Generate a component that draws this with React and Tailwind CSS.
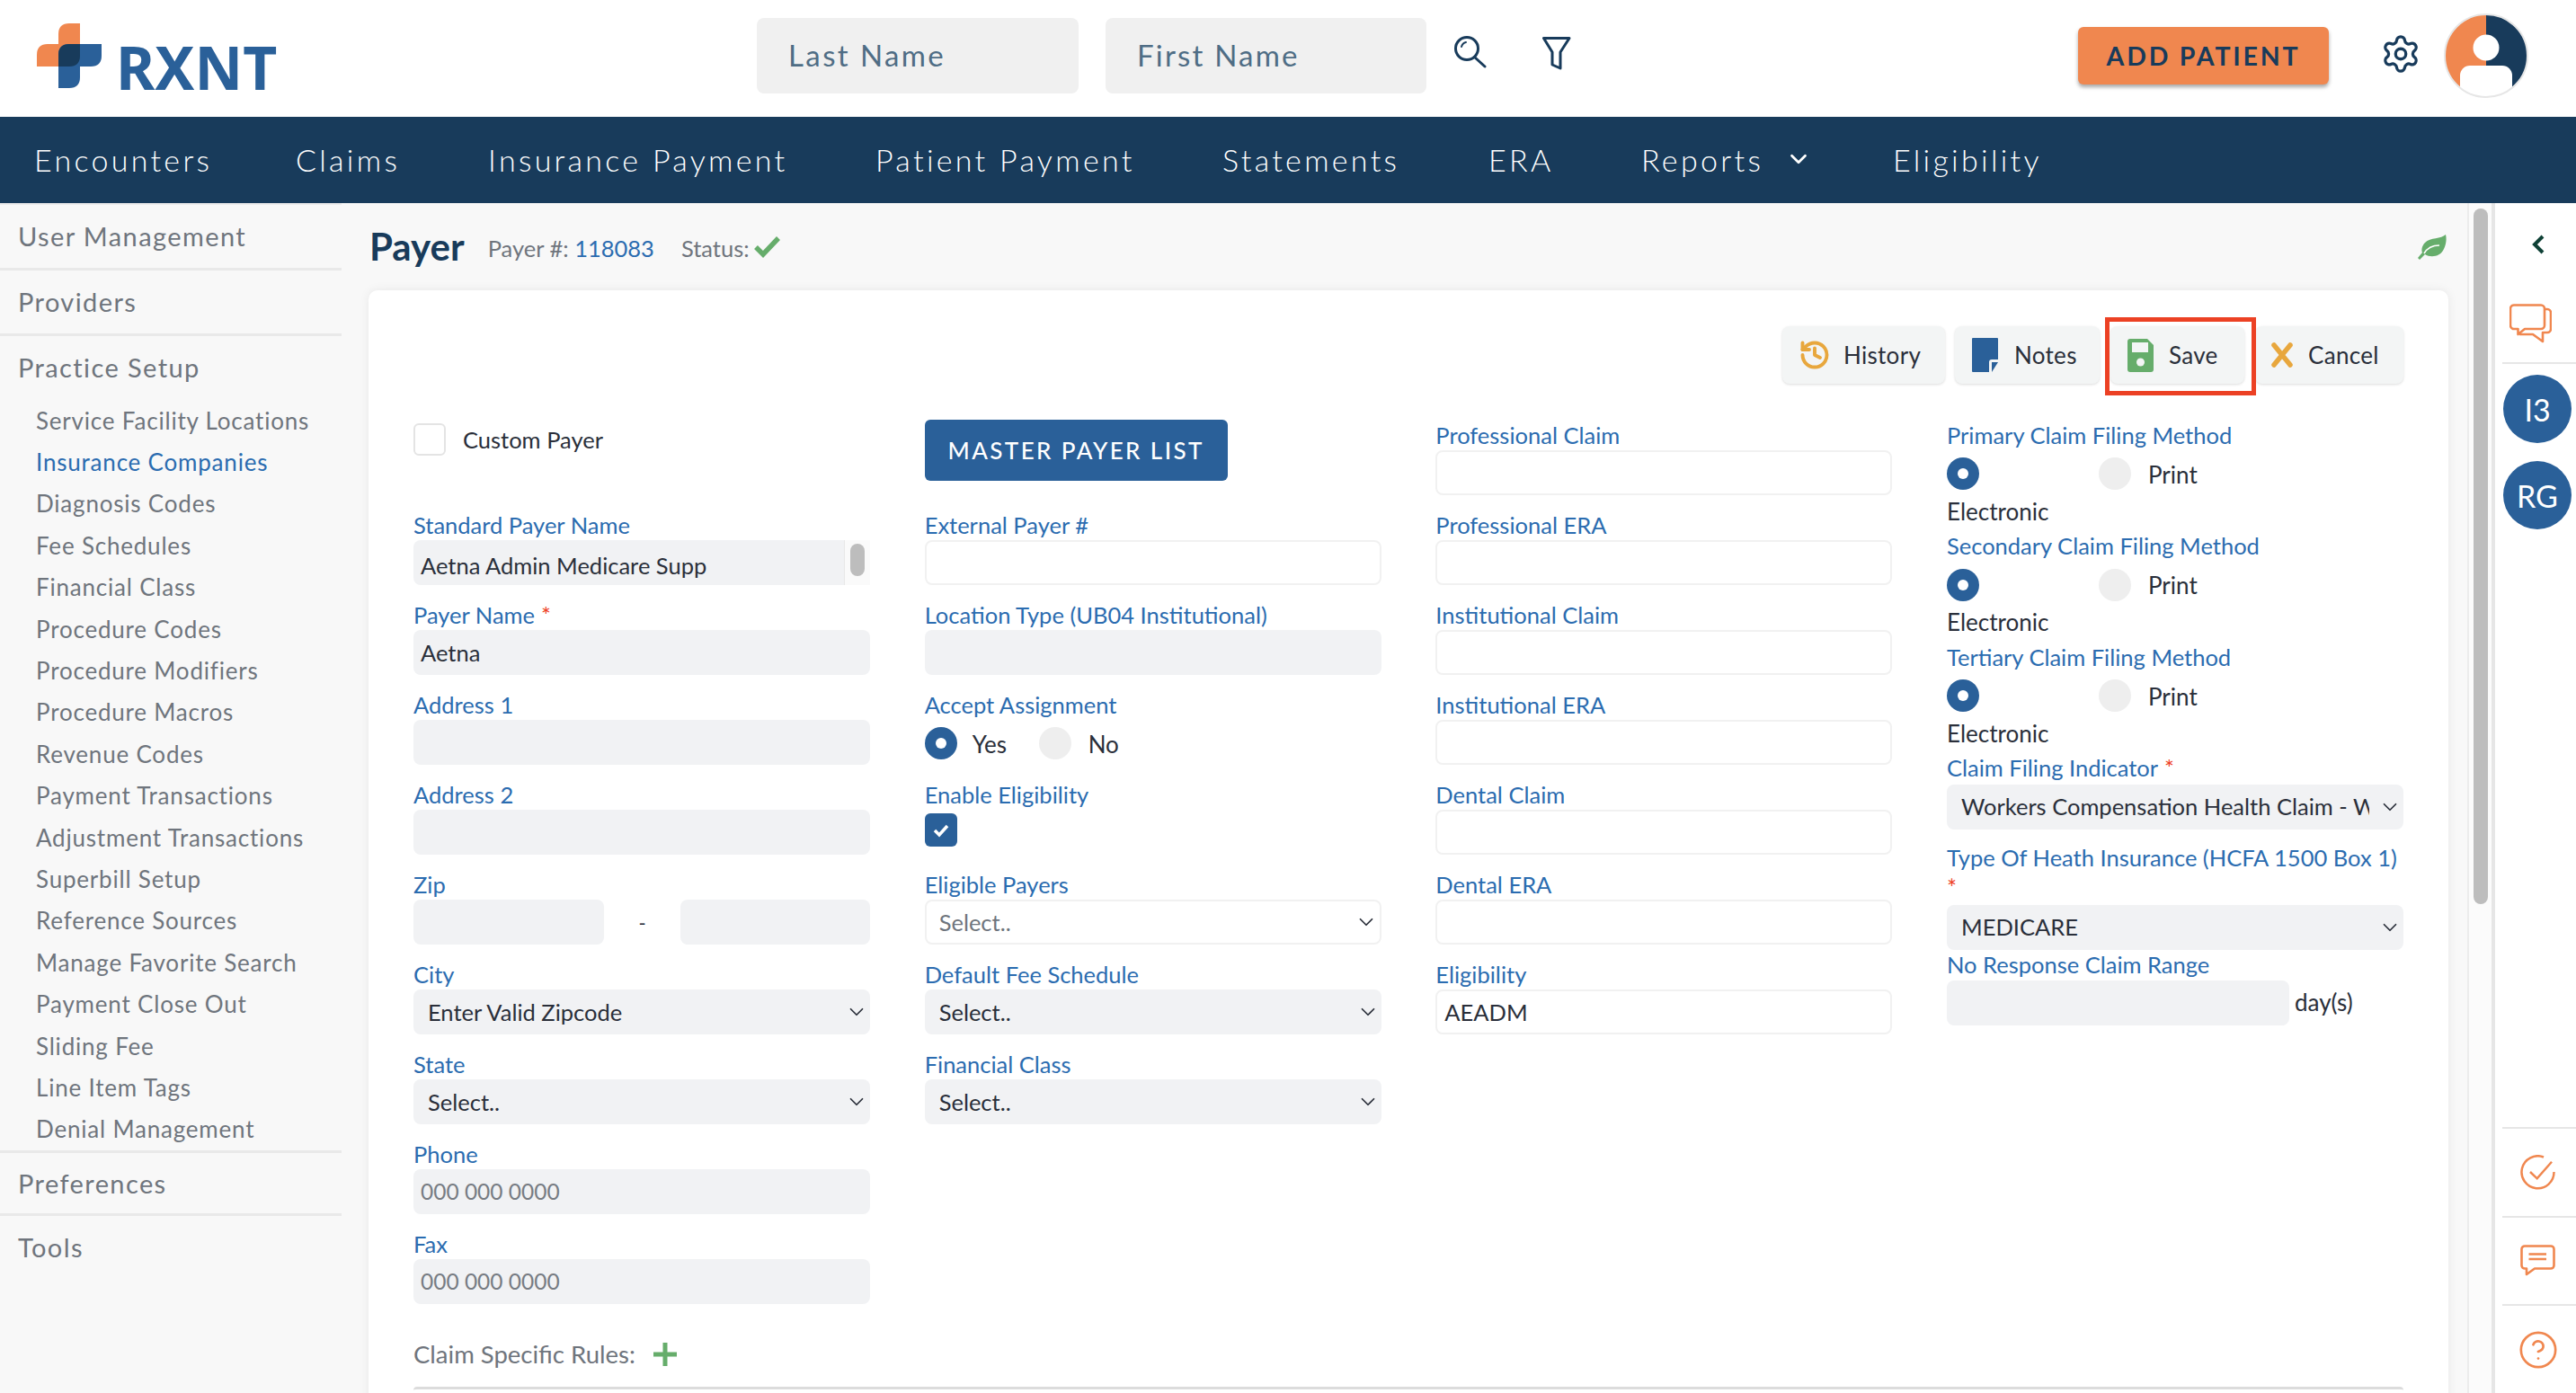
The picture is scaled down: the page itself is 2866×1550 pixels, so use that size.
import { ChevronDown, History, Settings, CircleHelp } from "lucide-react";

const sideMain = ["User Management", "Providers"];
const sideSub = [
  "Service Facility Locations", "Insurance Companies", "Diagnosis Codes", "Fee Schedules", "Financial Class",
  "Procedure Codes", "Procedure Modifiers", "Procedure Macros", "Revenue Codes", "Payment Transactions",
  "Adjustment Transactions", "Superbill Setup", "Reference Sources", "Manage Favorite Search", "Payment Close Out",
  "Sliding Fee", "Line Item Tags", "Denial Management",
];

function Logo() {
  return (
    <div className="flex items-center">
      <svg width="72" height="72" viewBox="0 0 72 72">
        <path d="M24 23V12Q24 0 36 0H48V36Q48 48 36 48H0V35Q0 23 12 23Z" fill="#f0874f" />
        <path d="M36 23H72V36Q72 48 60 48H48V60Q48 72 36 72H24V35Q24 23 36 23Z" fill="#2a6099" />
        <path d="M36 23H48V36Q48 48 36 48H24V35Q24 23 36 23Z" fill="#183b5b" />
      </svg>
      <span className="ml-[16px] mt-[23px] w-[178px] font-['Noto_Sans',sans-serif] text-[66px] leading-[50px] font-bold text-[#2a6099]">RXNT</span>
    </div>
  );
}

function Header() {
  return (
    <div className="flex h-[130px] items-center bg-white pb-[6px] pl-[41px] pr-[53px]">
      <Logo />
      <div className="ml-[535px] flex h-[84px] w-[358px] items-center rounded-lg bg-[#f0f0f0] pl-[35px] text-[33px] tracking-[2.4px] text-[#4f6d85]">Last Name</div>
      <div className="ml-[30px] flex h-[84px] w-[357px] items-center rounded-lg bg-[#f0f0f0] pl-[35px] text-[33px] tracking-[2.2px] text-[#4f6d85]">First Name</div>
      <svg className="ml-[31px] -mt-[8px]" width="36" height="36" viewBox="0 0 36 36" fill="none" stroke="#183b5b" strokeWidth="3" strokeLinecap="round">
        <circle cx="14" cy="14" r="12.5" />
        <path d="M22.5 23.5L34 34" />
        <path d="M8 12Q9 8 13 7" strokeWidth="2" />
      </svg>
      <svg className="ml-[62px] -mt-[6px]" width="32" height="38" viewBox="0 0 32 38" fill="none" stroke="#183b5b" strokeWidth="3" strokeLinejoin="round">
        <path d="M1.5 2.5H30L20 18V36L11 32V18Z" />
      </svg>
      <button className="ml-auto flex h-[64px] w-[279px] items-center justify-center rounded-md bg-[#f0874f] text-[28.5px] font-bold tracking-[2.8px] text-[#183b5b] shadow-[0_3px_4px_rgba(0,0,0,0.35)]">ADD PATIENT</button>
      <Settings className="ml-[57px] -mt-[4px] text-[#183b5b]" size={46} strokeWidth={1.7} />
      <svg className="ml-[25px]" width="94" height="94" viewBox="0 0 94 94">
        <clipPath id="avatarClip"><circle cx="47" cy="47" r="46" /></clipPath>
        <g clipPath="url(#avatarClip)">
          <rect x="0" y="0" width="47" height="94" fill="#f0874f" />
          <rect x="47" y="0" width="47" height="94" fill="#183b5b" />
          <circle cx="47" cy="38" r="14.5" fill="white" />
          <rect x="18" y="58" width="58" height="50" rx="11" fill="white" />
        </g>
        <circle cx="47" cy="47" r="46" fill="none" stroke="#e6e6e6" strokeWidth="2" />
      </svg>
    </div>
  );
}

function NavBar() {
  return (
    <div className="flex h-[96px] items-center bg-[#183b5b] pb-[2px] pl-[38px] text-[34px] font-light tracking-[3.3px] text-white">
      <span className="w-[291px]">Encounters</span>
      <span className="w-[214px]">Claims</span>
      <span className="w-[431px]">Insurance Payment</span>
      <span className="w-[386px]">Patient Payment</span>
      <span className="w-[296px]">Statements</span>
      <span className="w-[170px]">ERA</span>
      <span className="flex w-[280px] items-center">
        Reports
        <ChevronDown className="ml-[24px]" size={30} strokeWidth={2.2} />
      </span>
      <span>Eligibility</span>
    </div>
  );
}

function Sidebar() {
  return (
    <div className="w-[380px] shrink-0 border-t-2 border-[#ececec] text-[#6f757d]">
      {sideMain.map((s) => (
        <div key={s} className="flex h-[73px] items-center border-b-[3px] border-[#e9e9e9] pl-[20px] text-[29px] tracking-[1.4px]">{s}</div>
      ))}
      <div className="flex h-[71px] items-center pb-[2px] pl-[20px] text-[29px] tracking-[1.4px]">Practice Setup</div>
      <div className="border-b-[3px] border-[#e9e9e9]">
        {sideSub.map((s) => (
          <div key={s} className={`flex h-[46.4px] items-center pl-[40px] text-[26px] tracking-[0.8px] ${s === "Insurance Companies" ? "text-[#2b6cb0]" : ""}`}>{s}</div>
        ))}
      </div>
      <div className="flex h-[70px] items-center border-b-[3px] border-[#e9e9e9] pl-[20px] text-[29px] tracking-[1.4px]">Preferences</div>
      <div className="flex h-[70px] items-center pl-[20px] text-[29px] tracking-[1.4px]">Tools</div>
    </div>
  );
}

function Label({ children, required }) {
  return (
    <div className="flex h-8 items-center whitespace-nowrap pb-[2px] text-[25.5px] text-[#2b6cb0]">
      {children}
      {required && <span className="ml-[7px] text-[#ee3f26]">*</span>}
    </div>
  );
}

function TextBox({ value, placeholder, white, className = "" }) {
  return (
    <div className={`flex h-[50px] items-center rounded-lg pl-2 ${white ? "border-2 border-[#f1f1f1] bg-white" : "bg-[#f1f2f4]"} ${placeholder ? "text-[24.5px] text-[#777c83]" : "text-[25.5px] text-[#2a2f3a]"} ${className}`}>
      {value || placeholder}
    </div>
  );
}

function SelectBox({ value, white, muted }) {
  return (
    <div className={`flex h-[50px] items-center rounded-lg pr-[2px] text-[25.5px] ${white ? "border-2 border-[#f1f1f1] bg-white pl-[14px]" : "bg-[#f1f2f4] pl-4"} ${muted ? "text-[#6f757d]" : "text-[#2a2f3a]"}`}>
      <span className="flex-1 overflow-hidden whitespace-nowrap">{value}</span>
      <ChevronDown className="ml-[10px] shrink-0 text-[#2a2f3a]" size={26} strokeWidth={1.6} />
    </div>
  );
}

function Field({ label, required, children }) {
  return (
    <div className="h-[100px]">
      <Label required={required}>{label}</Label>
      {children}
    </div>
  );
}

function Radio({ on }) {
  return (
    <span className={`flex h-9 w-9 shrink-0 items-center justify-center rounded-full ${on ? "bg-[#2a6099]" : "bg-[#eeeeee]"}`}>
      {on && <span className="h-3 w-3 rounded-full bg-white" />}
    </span>
  );
}

function FilingMethod({ label }) {
  return (
    <div className="h-[123.5px]">
      <Label>{label}</Label>
      <div className="mt-2 flex h-9 items-center text-[26px] text-[#2a2f3a]">
        <div className="w-[169px]"><Radio on /></div>
        <Radio />
        <span className="ml-[19px] mt-[2px]">Print</span>
      </div>
      <div className="mt-2 flex h-8 items-center text-[26px] text-[#2a2f3a]">Electronic</div>
    </div>
  );
}

function ColumnOne() {
  return (
    <div>
      <div className="flex h-[102px] items-start pt-1">
        <span className="h-9 w-9 rounded-md border-2 border-[#e4e4e4] bg-white" />
        <span className="ml-[19px] -mt-px text-[25.5px] text-[#2a2f3a]">Custom Payer</span>
      </div>
      <Field label="Standard Payer Name">
        <div className="relative">
          <TextBox value="Aetna Admin Medicare Supp" className="pt-[7px]" />
          <div className="absolute right-0 top-0 flex h-[50px] w-[29px] justify-center border-l border-[#e8e8e8] bg-[#fafafa] pt-1">
            <span className="h-9 w-[16px] rounded-full bg-[#bdbdbd]" />
          </div>
        </div>
      </Field>
      <Field label="Payer Name" required><TextBox value="Aetna" /></Field>
      <Field label="Address 1"><TextBox /></Field>
      <Field label="Address 2"><TextBox /></Field>
      <Field label="Zip">
        <div className="flex items-center">
          <TextBox className="w-[212px]" />
          <span className="w-[85px] text-center text-[22px] text-[#2a2f3a]">-</span>
          <TextBox className="w-[211px]" />
        </div>
      </Field>
      <Field label="City"><SelectBox value="Enter Valid Zipcode" /></Field>
      <Field label="State"><SelectBox value="Select.." /></Field>
      <Field label="Phone"><TextBox placeholder="000 000 0000" /></Field>
      <Field label="Fax"><TextBox placeholder="000 000 0000" /></Field>
    </div>
  );
}

function ColumnTwo() {
  return (
    <div>
      <div className="h-[102px]">
        <button className="flex h-[68px] w-[337px] items-center justify-center rounded-md bg-[#2a6099] text-[26px] font-medium tracking-[2.4px] text-white">MASTER PAYER LIST</button>
      </div>
      <Field label="External Payer #"><TextBox white /></Field>
      <Field label="Location Type (UB04 Institutional)"><TextBox /></Field>
      <Field label="Accept Assignment">
        <div className="mt-2 flex h-9 items-center text-[26px] text-[#2a2f3a]">
          <Radio on />
          <span className="ml-[17px] mt-[2px] w-[74px]">Yes</span>
          <Radio />
          <span className="ml-[19px] mt-[2px]">No</span>
        </div>
      </Field>
      <Field label="Enable Eligibility">
        <div className="mt-1 flex h-[37px] w-9 items-center justify-center rounded-md bg-[#2a6099]">
          <svg width="20" height="16" viewBox="0 0 20 16" fill="none" stroke="white" strokeWidth="3.5"><path d="M3 8l5 5L17 3" /></svg>
        </div>
      </Field>
      <Field label="Eligible Payers"><SelectBox value="Select.." white muted /></Field>
      <Field label="Default Fee Schedule"><SelectBox value="Select.." /></Field>
      <Field label="Financial Class"><SelectBox value="Select.." /></Field>
    </div>
  );
}

function ColumnThree() {
  return (
    <div className="pt-[2px]">
      <Field label="Professional Claim"><TextBox white /></Field>
      <Field label="Professional ERA"><TextBox white /></Field>
      <Field label="Institutional Claim"><TextBox white /></Field>
      <Field label="Institutional ERA"><TextBox white /></Field>
      <Field label="Dental Claim"><TextBox white /></Field>
      <Field label="Dental ERA"><TextBox white /></Field>
      <Field label="Eligibility"><TextBox white value="AEADM" /></Field>
    </div>
  );
}

function ColumnFour() {
  return (
    <div className="pt-[2px]">
      <FilingMethod label="Primary Claim Filing Method" />
      <FilingMethod label="Secondary Claim Filing Method" />
      <FilingMethod label="Tertiary Claim Filing Method" />
      <Label required>Claim Filing Indicator</Label>
      <div className="mt-px"><SelectBox value="Workers Compensation Health Claim - Workers" /></div>
      <div className="mt-[17px]"><Label>Type Of Heath Insurance (HCFA 1500 Box 1)</Label></div>
      <div className="h-[35px] text-[26px] leading-[32px] text-[#ee3f26]">*</div>
      <SelectBox value="MEDICARE" />
      <div className="mt-[2px]"><Label>No Response Claim Range</Label></div>
      <div className="flex items-center">
        <TextBox className="w-[381px]" />
        <span className="ml-[6px] text-[26px] text-[#2a2f3a]">day(s)</span>
      </div>
    </div>
  );
}

function Toolbar() {
  const btn = "flex h-[64px] items-center rounded-lg bg-[#f3f5f5] text-[26px] tracking-[0.3px] text-[#2a2f3a] shadow-[0_1px_3px_rgba(0,0,0,0.14)]";
  return (
    <div className="flex h-[64px] justify-end">
      <button className={`${btn} w-[181px] pl-[18px]`}>
        <History size={36} strokeWidth={2.6} className="text-[#e8a73d]" />
        <span className="ml-[14px]">History</span>
      </button>
      <button className={`${btn} ml-[11px] w-[161px] pl-[19px]`}>
        <svg width="29" height="38" viewBox="0 0 29 38">
          <path d="M0 1a1 1 0 0 1 1-1h27a1 1 0 0 1 1 1v23H22a3 3 0 0 0-3 3v11H1a1 1 0 0 1-1-1Z" fill="#2a6099" />
          <path d="M22 27h7L22 38Z" fill="#2a6099" />
        </svg>
        <span className="ml-[18px]">Notes</span>
      </button>
      <button className={`${btn} relative ml-3 w-[149px] pl-[19px]`}>
        <svg width="29" height="37" viewBox="0 0 29 37">
          <path d="M3 0H22L29 7V34a3 3 0 0 1-3 3H3a3 3 0 0 1-3-3V3a3 3 0 0 1 3-3Z" fill="#66ad6b" />
          <rect x="5" y="4" width="18" height="11" fill="#f3f5f5" />
          <circle cx="14.5" cy="26" r="4.5" fill="#f3f5f5" />
        </svg>
        <span className="ml-[17px]">Save</span>
        <span className="absolute -bottom-[13px] -left-[6px] -right-[13px] -top-[10px] border-[5px] border-[#ec4124]" />
      </button>
      <button className={`${btn} ml-3 w-[165px] pl-[18px]`}>
        <svg width="24" height="28" viewBox="0 0 24 28" fill="none" stroke="#e8a73d" strokeWidth="5.5" strokeLinecap="round"><path d="M3 3L21 25M21 3L3 25" /></svg>
        <span className="ml-[17px]">Cancel</span>
      </button>
    </div>
  );
}

function PageTitle() {
  return (
    <div className="flex h-[97px] items-center pl-[1px]">
      <span className="text-[42px] font-bold text-[#183b5b]">Payer</span>
      <span className="ml-[26px] mt-1 text-[25.5px] text-[#6f757d]">Payer #: <span className="text-[#2b6cb0]">118083</span></span>
      <span className="ml-[30px] mt-1 text-[25.5px] text-[#6f757d]">Status:</span>
      <svg className="ml-[5px]" width="29" height="24" viewBox="0 0 29 24" fill="none" stroke="#66ad6b" strokeWidth="5.5"><path d="M2 12l8 8L27 2" /></svg>
      <svg className="ml-auto mr-[2px]" width="32" height="28" viewBox="0 0 32 28">
        <path d="M31 0C26 5 14 3 8 9C4 13 4 18 5 20L0 26L2 28L8 22C14 26 25 25 29 16C32 10 32 4 31 0Z" fill="#66ad6b" />
        <path d="M7 21C11 14 17 12 24 12" stroke="white" strokeWidth="1.6" fill="none" />
      </svg>
    </div>
  );
}

function RightRail() {
  return (
    <div className="flex w-[94px] shrink-0 flex-col border-l-4 border-[#e6e6e6] bg-white pl-2">
      <div className="flex h-[92px] items-center justify-center pr-[2px]">
        <svg width="14" height="22" viewBox="0 0 14 22" fill="none" stroke="#0f4136" strokeWidth="4"><path d="M12 2L3 11l9 9" /></svg>
      </div>
      <div className="h-[87px] border-b-[2px] border-[#e6e6e6] pl-[8px] pt-[20px]">
        <svg width="47" height="44" viewBox="0 0 47 44" fill="none" stroke="#f0874f" strokeWidth="2.6" strokeLinejoin="round">
          <path d="M5 1.5H35a4 4 0 0 1 4 4V24a4 4 0 0 1-4 4H17L9.5 34V28H5a4 4 0 0 1-4-4V5.5a4 4 0 0 1 4-4Z" />
          <path d="M39 6h3a4 4 0 0 1 4 4V28a4 4 0 0 1-4 4H37V42L26 34H11" />
        </svg>
      </div>
      <div className="ml-px mt-[12px] flex h-[76px] w-[76px] items-center justify-center rounded-full bg-[#2a6099] text-[34px] text-white">I3</div>
      <div className="ml-px mt-5 flex h-[76px] w-[76px] items-center justify-center rounded-full bg-[#2a6099] text-[34px] text-white">RG</div>
      <div className="mt-auto flex h-[99px] items-center border-t-[2px] border-[#e6e6e6] pl-[20px]">
        <svg width="40" height="40" viewBox="0 0 40 40" fill="none" stroke="#f0874f" strokeWidth="2.5">
          <path d="M26 2.5A18 18 0 1 0 37.5 19" />
          <path d="M11 19l7.7 7.3L35 7.7" />
        </svg>
      </div>
      <div className="flex h-[98px] items-center border-t-[2px] border-[#e6e6e6] pl-[20px]">
        <svg width="39" height="36" viewBox="0 0 39 36" fill="none" stroke="#f0874f" strokeWidth="2.6" strokeLinejoin="round">
          <path d="M5 1.5H34a3.5 3.5 0 0 1 3.5 3.5V23a3.5 3.5 0 0 1-3.5 3.5H16L7 33V26.5H5A3.5 3.5 0 0 1 1.5 23V5A3.5 3.5 0 0 1 5 1.5Z" />
          <path d="M9.5 10.5H29M9.5 16H29" />
        </svg>
      </div>
      <div className="flex h-[99px] items-center border-t-[2px] border-[#e6e6e6] pl-[17px]">
        <CircleHelp className="text-[#f0874f]" size={46} strokeWidth={1.4} />
      </div>
    </div>
  );
}

export default function App() {
  return (
    <div className="flex h-[1550px] w-[2866px] flex-col overflow-hidden bg-[#f8f8f8] font-['Lato',sans-serif]">
      <Header />
      <NavBar />
      <div className="flex min-h-0 flex-1">
        <Sidebar />
        <div className="flex-1 overflow-hidden pl-[30px] pr-[21px]">
          <PageTitle />
          <div className="h-[1300px] rounded-[10px] bg-white px-[50px] pt-[40px] shadow-[0_0_12px_rgba(0,0,0,0.07)]">
            <Toolbar />
            <div className="mt-[40px] grid grid-cols-4 gap-x-[60.67px]">
              <ColumnOne />
              <ColumnTwo />
              <ColumnThree />
              <ColumnFour />
            </div>
            <div className="mt-[10px] mb-[9px] flex h-[55px] items-center text-[27.5px] text-[#6f757d]">
              Claim Specific Rules:
              <svg className="ml-[20px]" width="26" height="26" viewBox="0 0 26 26" fill="none" stroke="#66ad6b" strokeWidth="5"><path d="M13 0V26M0 13H26" /></svg>
            </div>
            <div className="h-[40px] rounded-t border-t-[3px] border-[#dcdcdc]" />
          </div>
        </div>
        <div className="w-[27px] shrink-0 border-l-2 border-[#ececec] bg-[#fbfbfb] pl-[5px] pt-[6px]">
          <div className="h-[774px] w-[16px] rounded-full bg-[#bdbdbd]" />
        </div>
        <RightRail />
      </div>
    </div>
  );
}
